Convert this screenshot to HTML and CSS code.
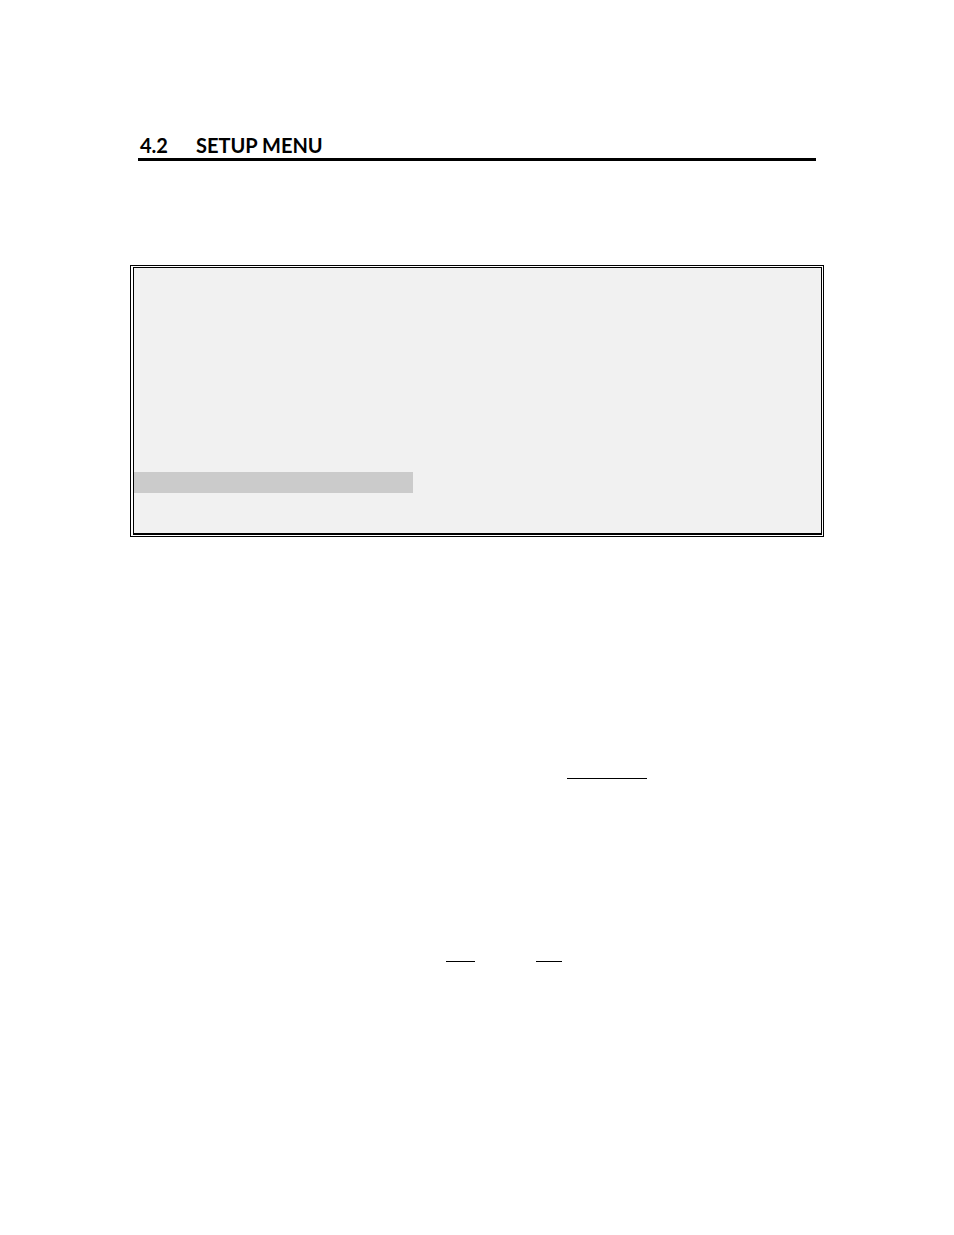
FILE: index.html
```
<!DOCTYPE html>
<html lang="en">
<head>
    <meta charset="UTF-8">
    <meta name="viewport" content="width=device-width, initial-scale=1.0">
    <title>4.2 Setup Menu</title>
    <link rel="stylesheet" href="styles.css">
</head>
<body>

<main class="page">
    <h2 class="section-title">
        <span class="number">4.2</span>
        <span>SETUP MENU</span>
    </h2>

    <div class="menu-frame">
        <div class="menu-screen">
            <div class="menu-selected"></div>
        </div>
    </div>

    <div class="line line-single">
        <span class="blank blank-long"></span>
    </div>
    <div class="line line-pair">
        <span class="blank blank-medium"></span>
        <span class="blank blank-short"></span>
    </div>
</main>

</body>
</html>
```
FILE: styles.css
```
* {
    box-sizing: border-box;
}

body {
    margin: 0;
    background-color: #fff;
    color: #000;
    font-family: Lato, sans-serif;
}

.page {
    padding: 132px 130px;
}

.section-title {
    display: flex;
    margin: 0 8px;
    padding-left: 2px;
    border-bottom: 3px solid #000;
    font-size: 20px;
    line-height: 26px;
    font-weight: bold;
}

.number {
    width: 56px;
}

.menu-frame {
    margin-top: 104px;
    padding: 1px 1px 1px 2px;
    border: 1px solid #000;
}

.menu-screen {
    padding: 204px 0 40px;
    border: 1px solid #000;
    border-bottom-width: 2px;
    background-color: #f1f1f1;
}

.menu-selected {
    width: 279px;
    height: 21px;
    background-color: #cbcbcb;
}

/* underlined blanks in the text below the menu */
.line {
    display: flex;
}

.line-single {
    margin-top: 241px;
    padding-left: 437px;
}

.line-pair {
    gap: 61px;
    margin-top: 182px;
    padding-left: 316px;
}

.blank {
    border-bottom: 1px solid #000;
}

.blank-long {
    width: 80px;
}

.blank-medium {
    width: 29px;
}

.blank-short {
    width: 26px;
}
```
